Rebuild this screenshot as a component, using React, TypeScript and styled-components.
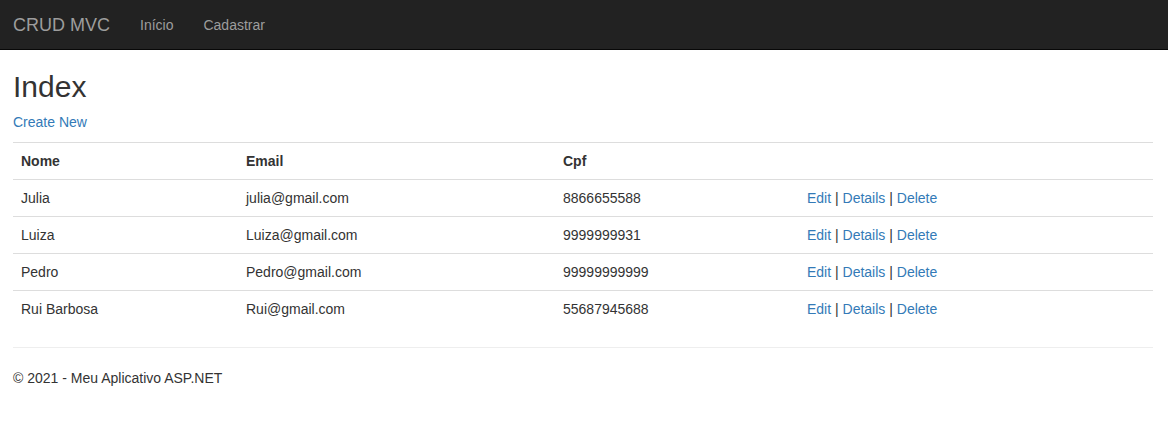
import React from "react";
import styled, { createGlobalStyle } from "styled-components";

const Global = createGlobalStyle`
  html, body { margin: 0; padding: 0; background: #fff; }
  body {
    font-family: "Liberation Sans", Arial, Helvetica, sans-serif;
    font-size: 14px;
    line-height: 20px;
    color: #333;
  }
  * { box-sizing: border-box; }
`;

const Navbar = styled.nav`
  height: 50px;
  background: #222;
  border-bottom: 1px solid #080808;
  display: flex;
  align-items: stretch;
`;

const Brand = styled.a`
  padding: 15px 15px 15px 13px;
  font-size: 18px;
  line-height: 20px;
  color: #9d9d9d;
  text-decoration: none;
`;

const NavLink = styled.a`
  padding: 15px;
  font-size: 14px;
  line-height: 20px;
  color: #9d9d9d;
  text-decoration: none;
`;

const Container = styled.div`
  padding: 0 15px 0 13px;
`;

const Title = styled.h2`
  font-size: 30px;
  font-weight: 500;
  line-height: 33px;
  margin: 20px 0 9px;
  color: #333;
`;

const Para = styled.p`
  margin: 0 0 10px;
`;

const Link = styled.a`
  color: #337ab7;
  text-decoration: none;
`;

const Table = styled.table`
  width: 1140px;
  border-collapse: collapse;
  border-spacing: 0;
  margin-bottom: 20px;
`;

const Th = styled.th<{ $w?: number }>`
  text-align: left;
  font-weight: bold;
  padding: 8px;
  line-height: 20px;
  border-top: 1px solid #ddd;
  border-bottom: 1px solid #ddd;
  width: ${(p) => (p.$w ? `${p.$w}px` : "auto")};
`;

const Td = styled.td`
  padding: 8px;
  line-height: 20px;
  border-top: 1px solid #ddd;
  vertical-align: top;
`;

const Hr = styled.hr`
  margin: 0 0 20px;
  border: 0;
  border-top: 1px solid #eee;
`;

const Footer = styled.footer`
  p { margin: 0 0 10px; }
`;

const rows = [
  ["Julia", "julia@gmail.com", "8866655588"],
  ["Luiza", "Luiza@gmail.com", "9999999931"],
  ["Pedro", "Pedro@gmail.com", "99999999999"],
  ["Rui Barbosa", "Rui@gmail.com", "55687945688"],
];

export default function App() {
  return (
    <>
      <Global />
      <Navbar>
        <Brand href="#">CRUD MVC</Brand>
        <NavLink href="#">Início</NavLink>
        <NavLink href="#">Cadastrar</NavLink>
      </Navbar>
      <Container>
        <Title>Index</Title>
        <Para>
          <Link href="#">Create New</Link>
        </Para>
        <Table>
          <thead>
            <tr>
              <Th $w={225}>Nome</Th>
              <Th $w={317}>Email</Th>
              <Th $w={244}>Cpf</Th>
              <Th></Th>
            </tr>
          </thead>
          <tbody>
            {rows.map((r) => (
              <tr key={r[0]}>
                <Td>{r[0]}</Td>
                <Td>{r[1]}</Td>
                <Td>{r[2]}</Td>
                <Td>
                  <Link href="#">Edit</Link> | <Link href="#">Details</Link> |{" "}
                  <Link href="#">Delete</Link>
                </Td>
              </tr>
            ))}
          </tbody>
        </Table>
        <Hr />
        <Footer>
          <p>© 2021 - Meu Aplicativo ASP.NET</p>
        </Footer>
      </Container>
    </>
  );
}
